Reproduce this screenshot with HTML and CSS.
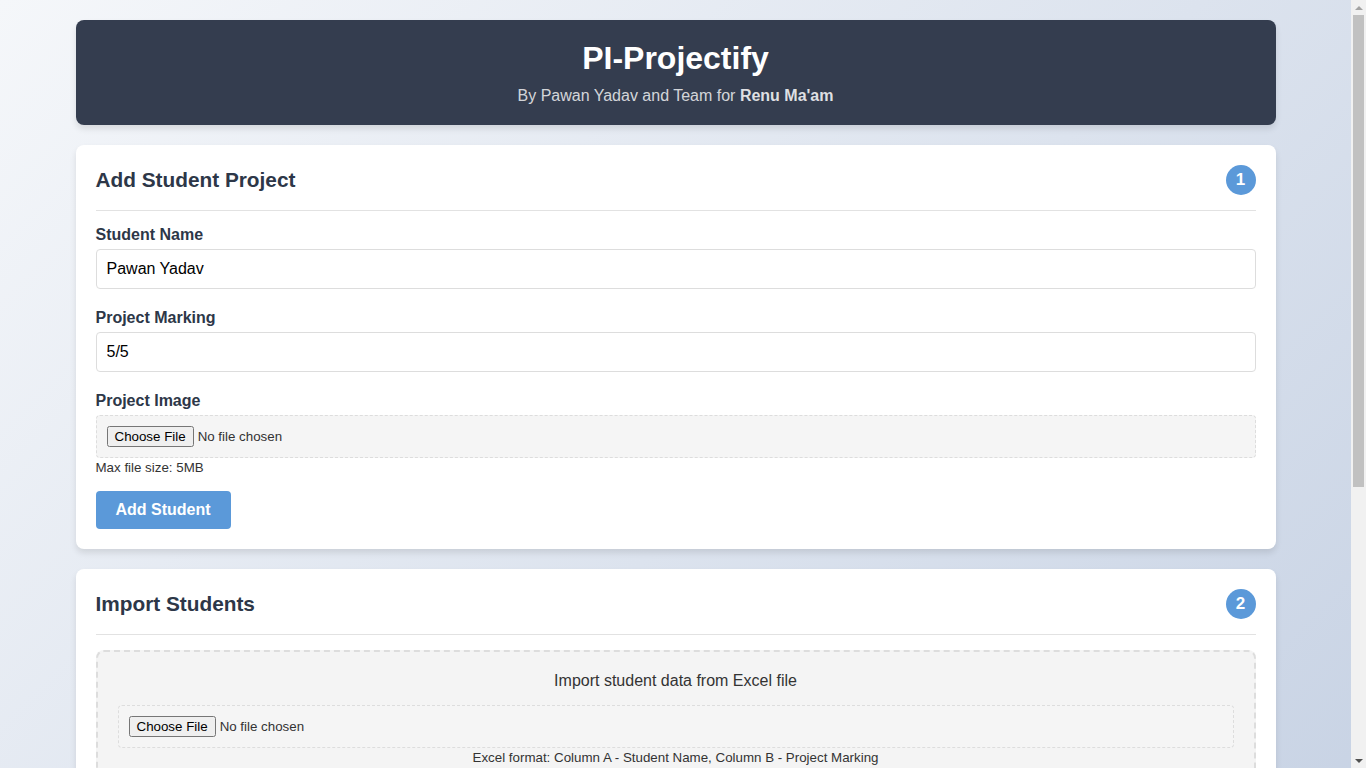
FILE: index.html
```html
<!DOCTYPE html>
<html lang="en">
<head>
<meta charset="utf-8">
<title>PI-Projectify</title>
<link rel="stylesheet" href="styles.css">
</head>
<body>
<div class="container">
  <header class="site-header">
    <h1 class="site-title">PI-Projectify</h1>
    <p class="site-sub">By Pawan Yadav and Team for <strong>Renu Ma'am</strong></p>
  </header>

  <section class="card">
    <div class="card-head">
      <h2 class="card-title">Add Student Project</h2>
      <span class="badge">1</span>
    </div>
    <div class="form-group">
      <label class="label" for="name">Student Name</label>
      <input class="text-input" id="name" type="text" value="Pawan Yadav">
    </div>
    <div class="form-group">
      <label class="label" for="mark">Project Marking</label>
      <input class="text-input" id="mark" type="text" value="5/5">
    </div>
    <div class="form-group last">
      <label class="label" for="img">Project Image</label>
      <input class="file-input" id="img" type="file">
      <div class="hint">Max file size: 5MB</div>
    </div>
    <button class="btn" type="button">Add Student</button>
  </section>

  <section class="card">
    <div class="card-head">
      <h2 class="card-title">Import Students</h2>
      <span class="badge">2</span>
    </div>
    <div class="import-area">
      <p class="import-text">Import student data from Excel file</p>
      <input class="file-input" type="file">
      <div class="hint center">Excel format: Column A - Student Name, Column B - Project Marking</div>
      <button class="btn import-btn" type="button">Import</button>
    </div>
  </section>

  <section class="card">
    <div class="card-head">
      <h2 class="card-title">Student Projects</h2>
      <span class="badge">3</span>
    </div>
    <p class="empty">No students added yet.</p>
  </section>
</div>

<div class="fake-scrollbar" aria-hidden="true">
  <span class="sb-arrow up"></span>
  <span class="sb-track"><span class="sb-thumb"></span></span>
  <span class="sb-arrow down"></span>
</div>
</body>
</html>
```

FILE: styles.css
```css
* { box-sizing: border-box; }

html { min-height: 100%; }

body {
  margin: 0;
  padding-right: 15px;
  font-family: "Liberation Sans", Arial, sans-serif;
  color: #333;
  background: linear-gradient(135deg, #f5f7fa 0%, #c3cfe2 100%);
  min-height: 100vh;
}

.container {
  width: 1200px;
  margin: 0 auto;
  padding: 20px 0;
}

.site-header {
  background: #343d4f;
  color: #fff;
  text-align: center;
  padding: 20px;
  border-radius: 8px;
  box-shadow: 0 4px 6px rgba(0, 0, 0, 0.1);
  margin-bottom: 20px;
}

.site-title {
  margin: 0;
  font-size: 32px;
  line-height: 37px;
  font-weight: bold;
}

.site-sub {
  margin: 10px 0 0;
  font-size: 16px;
  line-height: 18px;
  color: rgba(255, 255, 255, 0.8);
}

.site-sub strong { color: rgba(255, 255, 255, 0.85); }

.card {
  background: #fff;
  border-radius: 8px;
  padding: 20px;
  box-shadow: 0 4px 6px rgba(0, 0, 0, 0.1);
  margin-bottom: 20px;
}

.card-head {
  display: flex;
  justify-content: space-between;
  align-items: center;
  padding-bottom: 15px;
  border-bottom: 1px solid #e2e2e2;
  margin-bottom: 15px;
}

.card-title {
  margin: 0;
  font-size: 20.8px;
  color: #2d3748;
}

.badge {
  width: 30px;
  height: 30px;
  border-radius: 50%;
  background: #5b99d9;
  color: #fff;
  font-weight: bold;
  font-size: 17px;
  display: flex;
  align-items: center;
  justify-content: center;
}

.form-group { margin-bottom: 20px; }
.form-group.last { margin-bottom: 16px; }

.label {
  display: block;
  font-weight: bold;
  font-size: 16px;
  line-height: 18px;
  color: #2d3748;
  margin-bottom: 5px;
}

.text-input {
  display: block;
  width: 100%;
  height: 40px;
  padding: 10px;
  border: 1px solid #ddd;
  border-radius: 4px;
  font-family: "Liberation Sans", Arial, sans-serif;
  font-size: 16px;
  color: #000;
}

.file-input {
  display: block;
  width: 100%;
  padding: 10px;
  background: #f5f5f5;
  border: 1px dashed #ddd;
  border-radius: 4px;
  font-family: "Liberation Sans", Arial, sans-serif;
  font-size: 13.33px;
  color: #333;
}

.hint {
  font-size: 13.33px;
  color: #333;
  margin-top: 2px;
}

.hint.center { text-align: center; }

.btn {
  background: #5b99d9;
  color: #fff;
  border: none;
  border-radius: 4px;
  padding: 10px 20px;
  font-family: "Liberation Sans", Arial, sans-serif;
  font-size: 16px;
  font-weight: bold;
  cursor: pointer;
}

.import-area {
  background: #f4f4f4;
  border: 2px dashed #ddd;
  border-radius: 8px;
  padding: 20px;
  text-align: center;
}

.import-text {
  margin: 0 0 15px;
  font-size: 16px;
  color: #333;
}

.import-btn { margin-top: 15px; }

.empty {
  margin: 0;
  color: #666;
  text-align: center;
}

/* decorative classic scrollbar overlay */
.fake-scrollbar {
  position: fixed;
  top: 0;
  right: 0;
  width: 15px;
  height: 100vh;
  background: #f1f1f1;
  display: flex;
  flex-direction: column;
}

.sb-arrow {
  height: 15px;
  display: flex;
  align-items: center;
  justify-content: center;
}

.sb-arrow::before {
  content: "";
  border-left: 4px solid transparent;
  border-right: 4px solid transparent;
}

.sb-arrow.up::before { border-bottom: 4px solid #a3a3a3; }
.sb-arrow.down::before { border-top: 4px solid #505050; }

.sb-track {
  flex: 1;
  padding: 0 2px;
}

.sb-thumb {
  display: block;
  height: 472px;
  background: #c1c1c1;
}
```
